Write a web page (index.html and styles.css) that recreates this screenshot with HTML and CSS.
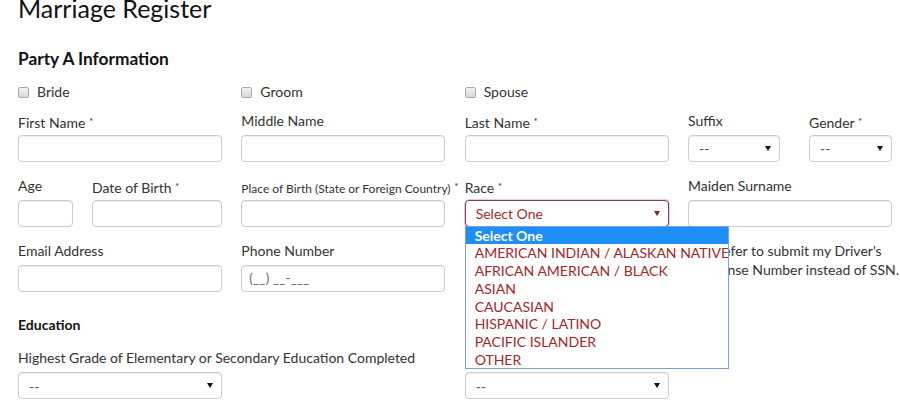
FILE: index.html
```html
<!DOCTYPE html>
<html lang="en">
<head>
<meta charset="utf-8">
<title>Marriage Register</title>
<link rel="stylesheet" href="styles.css">
</head>
<body>
<main class="page">
  <h1 class="title">Marriage Register</h1>
  <h2 class="section">Party A Information</h2>

  <div class="row checks">
    <label class="check"><span class="box"></span><span>Bride</span></label>
    <label class="check"><span class="box"></span><span>Groom</span></label>
    <label class="check"><span class="box"></span><span>Spouse</span></label>
    <div></div>
  </div>

  <div class="row fields first">
    <div class="field">
      <div class="lbl">First Name <span class="req">*</span></div>
      <div class="input"></div>
    </div>
    <div class="field">
      <div class="lbl">Middle Name</div>
      <div class="input"></div>
    </div>
    <div class="field">
      <div class="lbl">Last Name <span class="req">*</span></div>
      <div class="input"></div>
    </div>
    <div class="pair pair-sg">
      <div class="field">
        <div class="lbl">Suffix</div>
        <div class="select"><span class="val">--</span><svg class="arrow" viewBox="0 0 6 5" width="6" height="5"><path d="M0 0H6L3 5Z"/></svg></div>
      </div>
      <div class="field">
        <div class="lbl">Gender <span class="req">*</span></div>
        <div class="select"><span class="val">--</span><svg class="arrow" viewBox="0 0 6 5" width="6" height="5"><path d="M0 0H6L3 5Z"/></svg></div>
      </div>
    </div>
  </div>

  <div class="row fields">
    <div class="pair pair-ad">
      <div class="field">
        <div class="lbl">Age</div>
        <div class="input"></div>
      </div>
      <div class="field">
        <div class="lbl">Date of Birth <span class="req">*</span></div>
        <div class="input"></div>
      </div>
    </div>
    <div class="field">
      <div class="lbl"><span class="small">Place of Birth (State or Foreign Country)</span> <span class="req">*</span></div>
      <div class="input"></div>
    </div>
    <div class="field">
      <div class="lbl">Race <span class="req">*</span></div>
      <div class="select focus"><span class="val">Select One</span><svg class="arrow" viewBox="0 0 6 5" width="6" height="5"><path d="M0 0H6L3 5Z"/></svg>
        <ul class="dropdown">
          <li class="hl">Select One</li>
          <li>AMERICAN INDIAN / ALASKAN NATIVE</li>
          <li>AFRICAN AMERICAN / BLACK</li>
          <li>ASIAN</li>
          <li>CAUCASIAN</li>
          <li>HISPANIC / LATINO</li>
          <li>PACIFIC ISLANDER</li>
          <li>OTHER</li>
        </ul>
      </div>
    </div>
    <div class="field">
      <div class="lbl">Maiden Surname</div>
      <div class="input"></div>
    </div>
  </div>

  <div class="row fields">
    <div class="field">
      <div class="lbl">Email Address</div>
      <div class="input"></div>
    </div>
    <div class="field">
      <div class="lbl">Phone Number</div>
      <div class="input"><span class="ph">(__) __-___</span></div>
    </div>
    <div></div>
    <label class="check dl"><span class="box"></span><span class="dl-text">I prefer to submit my Driver's<br>License Number instead of SSN.</span></label>
  </div>

  <h3 class="sub">Education</h3>

  <div class="row fields edu">
    <div class="field">
      <div class="lbl nowrap">Highest Grade of Elementary or Secondary Education Completed</div>
      <div class="select"><span class="val">--</span><svg class="arrow" viewBox="0 0 6 5" width="6" height="5"><path d="M0 0H6L3 5Z"/></svg></div>
    </div>
    <div></div>
    <div class="field">
      <div class="lbl"></div>
      <div class="select"><span class="val">--</span><svg class="arrow" viewBox="0 0 6 5" width="6" height="5"><path d="M0 0H6L3 5Z"/></svg></div>
    </div>
    <div></div>
  </div>
</main>
</body>
</html>
```

FILE: styles.css
```css
* { box-sizing: border-box; }
html, body { margin: 0; padding: 0; background: #fff; }
body {
  font-family: Lato, "Open Sans", "Liberation Sans", sans-serif;
  color: #333;
  font-size: 14px;
  line-height: 20px;
  overflow: hidden;
  width: 900px;
  height: 418px;
}
.page { padding: 0 0 0 18px; }
.title {
  font-size: 25px;
  line-height: 30px;
  font-weight: 400;
  margin: -7px 0 0;
  color: #111;
}
.section {
  font-size: 17.3px;
  line-height: 24px;
  font-weight: 700;
  margin: 24.3px 0 0;
  color: #111;
}
.row {
  display: grid;
  grid-template-columns: repeat(4, 204px);
  column-gap: 19.33px;
}
.checks { margin-top: 11px; }
.check {
  display: flex;
  align-items: center;
  gap: 8px;
  color: #333;
}
.box {
  width: 11px;
  height: 11px;
  border: 1px solid #a9a9a9;
  border-radius: 2px;
  background: linear-gradient(#f2f2f2, #d9d9d9);
  flex: none;
}
.fields { margin-top: 14px; }
.fields.first { margin-top: 8.5px; }
.field { display: flex; flex-direction: column; min-width: 0; }
.lbl { height: 20px; margin-bottom: 4px; color: #333; white-space: nowrap; }
.small { font-size: 12px; }
.req { font-size: 10px; vertical-align: 3px; color: #333; }
.nowrap { white-space: nowrap; }
.input, .select {
  height: 27px;
  border: 1px solid #ccc;
  border-radius: 4px;
  box-shadow: inset 0 1px 1px rgba(0, 0, 0, 0.075);
  background: #fff;
}
.input { display: flex; align-items: center; padding-left: 7px; }
.ph { color: #666; font-size: 13px; letter-spacing: 0.3px; }
.select {
  display: flex;
  align-items: center;
  justify-content: space-between;
  padding: 0 8px 0 10px;
  color: #555;
  position: relative;
}
.select .val { font-size: 14px; padding-top: 2px; }
.arrow { fill: #111; display: block; }
.select.focus {
  border-color: #8c3a6a;
  box-shadow: 0 0 0 1px rgba(150, 120, 200, 0.35);
  color: #a22a2a;
}
.select.focus .arrow { fill: #9b1c1c; }
.pair { display: grid; }
.pair-sg { grid-template-columns: 92px 83px; column-gap: 29px; }
.pair-ad { grid-template-columns: 55px 130px; column-gap: 19px; }
.dl { align-items: flex-start; gap: 4px; line-height: 19px; }
.dl .box { margin-top: 4px; }
.dl-text { white-space: nowrap; color: #333; }
.dropdown {
  position: absolute;
  top: 100%;
  left: -1px;
  width: 264px;
  margin: 0;
  padding: 0;
  list-style: none;
  background: #fff;
  border: 1px solid #7e9fd8;
  z-index: 5;
}
.dropdown li {
  height: 17.7px;
  line-height: 18.5px;
  padding-left: 9px;
  font-size: 14px;
  color: #a3262a;
  white-space: nowrap;
  overflow: hidden;
}
.dropdown li.hl {
  background: #1e8ff8;
  color: #fff;
  font-weight: 700;
}
.sub {
  font-size: 14px;
  line-height: 20px;
  font-weight: 700;
  margin: 23px 0 0;
  color: #111;
}
.edu { margin-top: 13.4px; }
```
